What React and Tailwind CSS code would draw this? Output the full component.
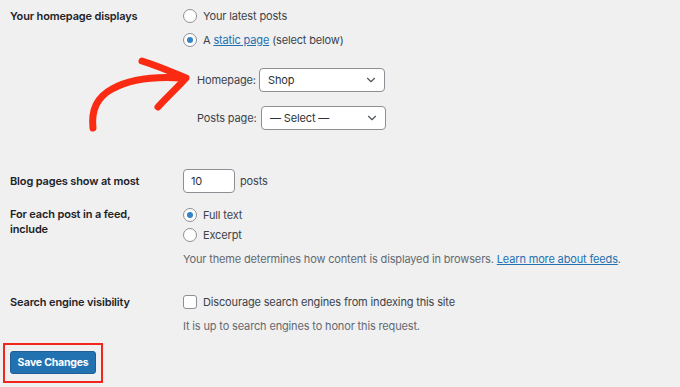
import { ChevronDown } from 'lucide-react';

function Radio({ checked }) {
  return (
    <span className="flex h-[14px] w-[14px] shrink-0 items-center justify-center rounded-full border border-[#8c8f94] bg-white">
      {checked && <span className="h-[6px] w-[6px] rounded-full bg-[#3582c4]" />}
    </span>
  );
}

function Select({ value, className }) {
  return (
    <div className={`flex h-[24px] items-center justify-between rounded-[4px] border border-[#8c8f94] bg-white pl-[8px] pr-[6px] text-[#2c3338] ${className}`}>
      <span>{value}</span>
      <ChevronDown size={14} strokeWidth={2} className="text-[#50575e]" />
    </div>
  );
}

export default function App() {
  return (
    <div
      className="relative h-[387px] w-[680px] overflow-hidden bg-[#f0f0f1] text-[11px] tracking-[-0.15px] text-[#1d2327]"
      style={{ fontFamily: 'Inter, "Liberation Sans", sans-serif' }}
    >
      {/* Homepage displays */}
      <div className="flex pt-[8px]">
        <div className="w-[183px] pl-[10px] font-semibold leading-[16px]">Your homepage displays</div>
        <div className="flex flex-col">
          <label className="flex h-[16px] items-center gap-[6px] text-[#3c434a]">
            <Radio />
            Your latest posts
          </label>
          <label className="mt-[8px] flex h-[16px] items-center gap-[6px] text-[#3c434a]">
            <Radio checked />
            <span>
              A <span className="text-[#2271b1] underline">static page</span> (select below)
            </span>
          </label>
          <div className="mt-[20px] flex items-center pl-[14px]">
            <span className="w-[62px] whitespace-nowrap text-[#3c434a]">Homepage:</span>
            <Select value="Shop" className="w-[126px]" />
          </div>
          <div className="mt-[14px] flex items-center pl-[14px]">
            <span className="w-[64px] whitespace-nowrap text-[#3c434a]">Posts page:</span>
            <Select value="— Select —" className="w-[125px]" />
          </div>
        </div>
      </div>

      {/* Blog pages */}
      <div className="mt-[39px] flex items-center">
        <div className="w-[183px] pl-[10px] font-semibold">Blog pages show at most</div>
        <div className="flex h-[24px] w-[52px] items-center rounded-[4px] border border-[#8c8f94] bg-white pl-[7px] text-[#2c3338]">10</div>
        <span className="ml-[5px] text-[#3c434a]">posts</span>
      </div>

      {/* Feed */}
      <div className="mt-[14px] flex">
        <div className="w-[183px] pl-[10px] font-semibold leading-[15px]">
          For each post in a feed,
          <br />
          include
        </div>
        <div className="flex flex-col">
          <label className="flex h-[16px] items-center gap-[6px] text-[#3c434a]">
            <Radio checked />
            Full text
          </label>
          <label className="mt-[4px] flex h-[16px] items-center gap-[6px] text-[#3c434a]">
            <Radio />
            Excerpt
          </label>
          <p className="mt-[8px] leading-[16px] text-[#646970]">
            Your theme determines how content is displayed in browsers.{' '}
            <span className="text-[#2271b1] underline">Learn more about feeds</span>.
          </p>
        </div>
      </div>

      {/* Search engine visibility */}
      <div className="mt-[27px] flex">
        <div className="w-[183px] pl-[10px] font-semibold leading-[16px]">Search engine visibility</div>
        <div className="flex flex-col">
          <label className="flex h-[16px] items-center gap-[6px] text-[#3c434a]">
            <span className="h-[14px] w-[14px] rounded-[3px] border border-[#8c8f94] bg-white" />
            Discourage search engines from indexing this site
          </label>
          <p className="mt-[8px] leading-[16px] text-[#646970]">It is up to search engines to honor this request.</p>
        </div>
      </div>

      {/* Save */}
      <div className="ml-[3px] mt-[9px] h-[40px] w-[100px] border-2 border-[#f2271c] px-[5px] pt-[6px]">
        <button className="h-[23px] w-[86px] rounded-[3px] border border-[#1d5f96] bg-[#2271b1] text-[10.5px] font-bold tracking-[-0.2px] text-white">
          Save Changes
        </button>
      </div>

      {/* annotation arrow */}
      <svg className="absolute left-0 top-0" width="680" height="387" viewBox="0 0 680 387" fill="none">
        <path
          d="M93 128 C91 110 97 97 112 89 C128 80 152 76 182 78"
          stroke="#fb2a12"
          strokeWidth="7"
          strokeLinecap="round"
        />
        <path
          d="M142 61 C158 66 172 72 186 78 C177 88 166 98 158 107"
          stroke="#fb2a12"
          strokeWidth="7"
          strokeLinecap="round"
          strokeLinejoin="round"
        />
      </svg>
    </div>
  );
}
